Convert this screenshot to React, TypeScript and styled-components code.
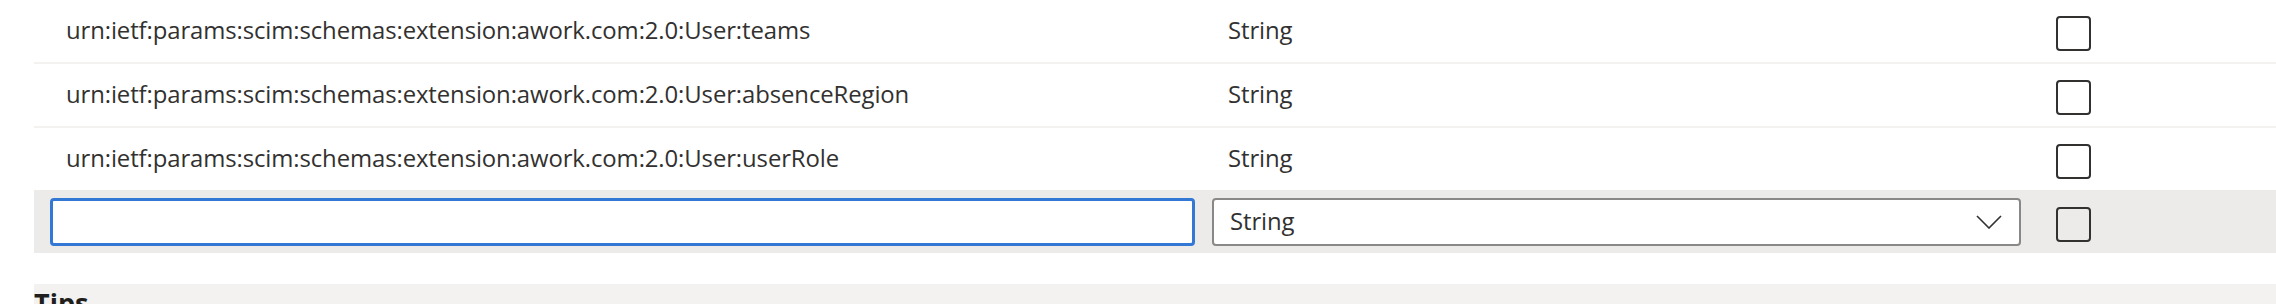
import React from "react";
import styled, { createGlobalStyle } from "styled-components";

const GlobalStyle = createGlobalStyle`
  html, body {
    margin: 0;
    padding: 0;
    background: #ffffff;
    overflow: hidden;
  }
  body {
    font-family: "Open Sans", "Noto Sans", "Liberation Sans", sans-serif;
    color: #323130;
  }
`;

const Page = styled.div`
  width: 2276px;
  height: 304px;
  display: flex;
  flex-direction: column;
  overflow: hidden;
`;

const Table = styled.div`
  display: flex;
  flex-direction: column;
  padding-left: 34px;
  flex-shrink: 0;
`;

const Row = styled.div<{ $edit?: boolean; $last?: boolean }>`
  display: grid;
  grid-template-columns: 1162px 844px 1fr;
  align-items: center;
  height: ${(p) => (p.$edit ? "63px" : "62px")};
  background: ${(p) => (p.$edit ? "#edebe9" : "transparent")};
  border-bottom: ${(p) => (p.$edit || p.$last ? "0" : "2px solid #f3f2f1")};
  flex-shrink: 0;
`;

const Cell = styled.div`
  padding-left: 16px;
  display: flex;
  align-items: center;
  min-width: 0;
`;

const CellText = styled.span`
  padding-left: 16px;
  font-size: 23.9px;
  letter-spacing: -0.1px;
  line-height: 28px;
  margin-top: -2px;
  white-space: nowrap;
  color: #323130;
`;

const CheckCell = styled.div`
  padding-left: 16px;
  padding-top: 5px;
  display: flex;
  align-items: center;
`;

const CheckBox = styled.div`
  width: 35px;
  height: 35px;
  box-sizing: border-box;
  border: 2px solid #323130;
  border-radius: 4px;
  background: transparent;
`;

const TextInput = styled.input`
  box-sizing: border-box;
  width: 1145px;
  height: 48px;
  border: 3px solid #3378d4;
  border-radius: 4px;
  background: #ffffff;
  outline: none;
  padding: 0 16px;
  font-family: inherit;
  font-size: 23.9px;
  color: #323130;
`;

const Select = styled.div`
  box-sizing: border-box;
  width: 809px;
  height: 48px;
  border: 2px solid #8a8886;
  border-radius: 4px;
  background: #ffffff;
  display: flex;
  align-items: center;
  justify-content: space-between;
  padding: 0 17px 0 16px;
`;

const SelectText = styled.span`
  font-size: 23.9px;
  letter-spacing: -0.1px;
  line-height: 28px;
  margin-top: -1px;
  color: #323130;
`;

const Chevron = styled.svg`
  width: 26px;
  height: 14px;
  display: block;
`;

const Spacer = styled.div`
  height: 31px;
  flex-shrink: 0;
`;

const Tips = styled.div`
  margin-left: 34px;
  background: #f3f2f1;
  flex: 1 0 auto;
  padding-top: 1px;
`;

const TipsTitle = styled.h2`
  margin: 0;
  font-size: 27px;
  font-weight: 700;
  color: #201f1e;
  line-height: 36px;
`;

const rows = [
  "urn:ietf:params:scim:schemas:extension:awork.com:2.0:User:teams",
  "urn:ietf:params:scim:schemas:extension:awork.com:2.0:User:absenceRegion",
  "urn:ietf:params:scim:schemas:extension:awork.com:2.0:User:userRole",
];

export default function App() {
  return (
    <Page>
      <GlobalStyle />
      <Table>
        {rows.map((name, i) => (
          <Row key={name} $last={i === rows.length - 1}>
            <Cell>
              <CellText>{name}</CellText>
            </Cell>
            <Cell>
              <CellText>String</CellText>
            </Cell>
            <CheckCell>
              <CheckBox role="checkbox" aria-checked="false" />
            </CheckCell>
          </Row>
        ))}
        <Row $edit>
          <Cell>
            <TextInput type="text" defaultValue="" />
          </Cell>
          <Cell>
            <Select>
              <SelectText>String</SelectText>
              <Chevron viewBox="0 0 26 14" fill="none">
                <path d="M1 1 L13 13 L25 1" stroke="#323130" strokeWidth="1.6" />
              </Chevron>
            </Select>
          </Cell>
          <CheckCell>
            <CheckBox role="checkbox" aria-checked="false" />
          </CheckCell>
        </Row>
      </Table>
      <Spacer />
      <Tips>
        <TipsTitle>Tips</TipsTitle>
      </Tips>
    </Page>
  );
}
